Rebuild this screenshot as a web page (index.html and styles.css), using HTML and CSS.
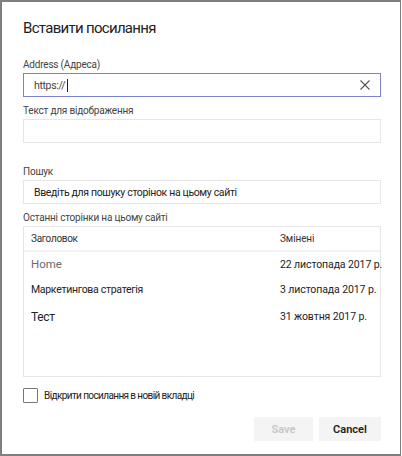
FILE: index.html
```html
<!DOCTYPE html>
<html lang="uk">
<head>
    <meta charset="UTF-8">
    <meta name="viewport" content="width=device-width, initial-scale=1.0">
    <title>Вставити посилання</title>
    <link rel="stylesheet" href="styles.css">
</head>
<body>
    <div class="dialog">
        <h1 class="dialog-title">Вставити посилання</h1>

        <div class="field field-address">
            <label class="field-label" for="address">Address (Адреса)</label>
            <div class="input-box input-active">
                <input type="text" id="address" class="text-input" value="https://">
                <span class="caret"></span>
                <span class="clear-btn">
                    <svg width="10" height="10" viewBox="0 0 10 10"><path d="M0.5 0.5 L9.5 9.5 M9.5 0.5 L0.5 9.5" stroke="#555" stroke-width="1.1" fill="none"/></svg>
                </span>
            </div>
        </div>

        <div class="field field-display">
            <label class="field-label" for="display">Текст для відображення</label>
            <div class="input-box">
                <input type="text" id="display" class="text-input">
            </div>
        </div>

        <div class="field field-search">
            <label class="field-label" for="search">Пошук</label>
            <div class="input-box">
                <input type="text" id="search" class="text-input search-input" placeholder="Введіть для пошуку сторінок на цьому сайті">
            </div>
        </div>

        <div class="field field-recent">
            <div class="field-label">Останні сторінки на цьому сайті</div>
            <div class="pages-table">
                <div class="pages-row pages-head">
                    <div class="col-title">Заголовок</div>
                    <div class="col-date">Змінені</div>
                </div>
                <div class="pages-row page-home">
                    <div class="col-title">Home</div>
                    <div class="col-date">22 листопада 2017 р.</div>
                </div>
                <div class="pages-row">
                    <div class="col-title">Маркетингова стратегія</div>
                    <div class="col-date">3 листопада 2017 р.</div>
                </div>
                <div class="pages-row page-test">
                    <div class="col-title">Тест</div>
                    <div class="col-date">31 жовтня 2017 р.</div>
                </div>
            </div>
        </div>

        <label class="new-tab">
            <span class="checkbox"></span>
            <span class="new-tab-text">Відкрити посилання в новій вкладці</span>
        </label>

        <div class="dialog-actions">
            <button class="btn btn-save" disabled>Save</button>
            <button class="btn btn-cancel">Cancel</button>
        </div>
    </div>
</body>
</html>
```

FILE: styles.css
```css
:root {
    --text-color: #333333;
    --label-color: #444444;
    --border-light: #e6e6e6;
    --border-active: #7c84d2;
    --frame-color: #7f7f7f;
}
* { margin: 0; padding: 0; box-sizing: border-box; }
body { font-family: Roboto, 'Noto Sans', sans-serif; color: var(--text-color); background: #fff; }
.dialog { width: 401px; height: 456px; border: 2px solid var(--frame-color); border-right-width: 1px; padding: 16px 19px 0 21px; }
.dialog-title { font-size: 15px; font-weight: 400; line-height: 20px; color: #222; letter-spacing: -0.7px; }
.field-label { display: block; font-size: 10px; line-height: 14px; color: var(--label-color); margin-bottom: 1px; white-space: nowrap; letter-spacing: -0.2px; }
.field-address { margin-top: 20px; }
.field-display { margin-top: 7px; }
.field-search { margin-top: 22px; }
.field-recent { margin-top: 7px; }
.input-box { position: relative; height: 24px; border: 1px solid var(--border-light); display: flex; align-items: center; }
.input-active { border-color: var(--border-active); }
.text-input { border: none; outline: none; height: 100%; flex: 1; padding: 0 10px; font-family: inherit; font-size: 10.5px; color: #444; background: transparent; letter-spacing: -0.35px; }
.search-input::placeholder { color: #222; opacity: 1; }
.caret { position: absolute; left: 43px; top: 5px; width: 1px; height: 13px; background: #222; }
.clear-btn { width: 30px; display: flex; align-items: center; justify-content: center; }
.pages-table { height: 151px; border: 1px solid var(--border-light); margin-top: 1px; }
.pages-row { display: flex; align-items: center; height: 27px; padding-left: 7px; font-size: 10.5px; color: #222; white-space: nowrap; letter-spacing: -0.3px; }
.pages-head { height: 25px; border-bottom: 2px solid #f2f2f2; font-size: 10px; color: #333; }
.page-home { height: 24px; color: #6b6b6b; font-size: 11.5px; letter-spacing: 0; }
.page-test { font-size: 12px; }
.col-title { flex: 0 0 249px; }
.col-date { flex: 1; font-size: 10.5px; color: #222; letter-spacing: -0.1px; }
.pages-head .col-date { font-size: 10px; color: #333; }
.new-tab { display: flex; align-items: center; margin-top: 10px; height: 16px; cursor: pointer; }
.checkbox { width: 15px; height: 15px; border: 1px solid #777; border-radius: 1px; margin-right: 6px; }
.new-tab-text { font-size: 10px; color: #222; letter-spacing: -0.6px; }
.dialog-actions { display: flex; justify-content: flex-end; gap: 6px; margin-top: 14px; }
.btn { height: 24px; border: none; background: #f4f4f4; font-family: inherit; font-size: 11px; font-weight: 600; cursor: pointer; }
.btn-save { width: 59px; color: #c6c6c6; }
.btn-cancel { width: 62px; color: #222; }
```
